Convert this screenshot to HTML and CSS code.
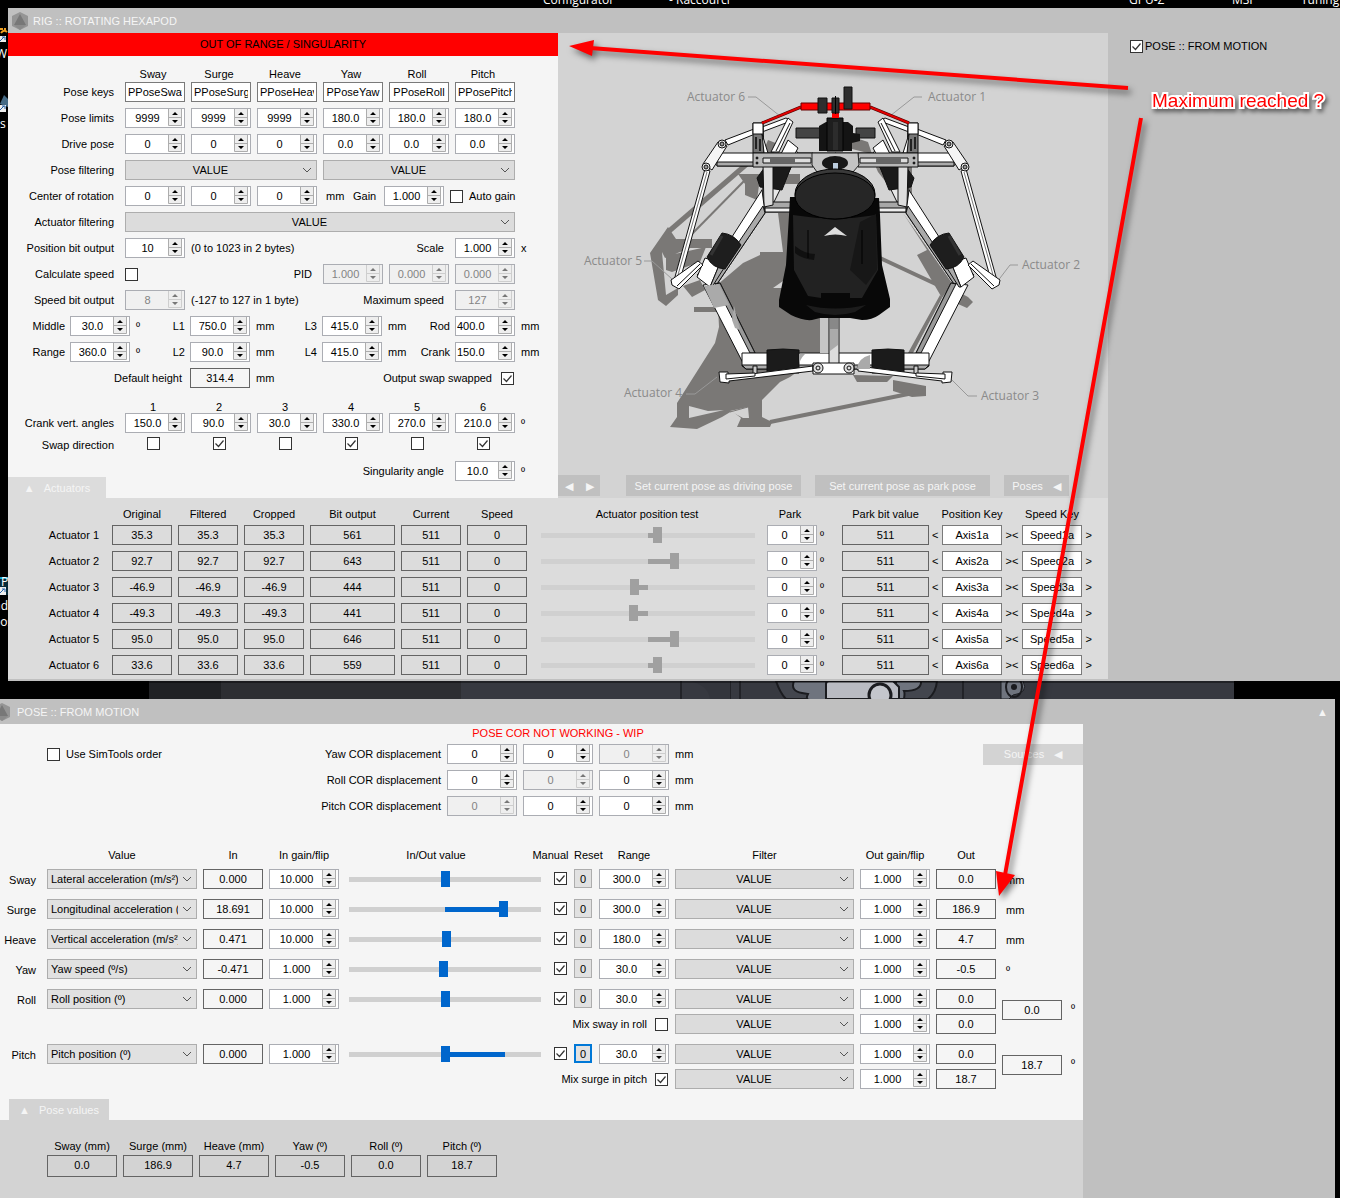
FILE: index.html
```html
<!DOCTYPE html>
<html lang="en">
<head>
<meta charset="utf-8">
<title>Rig :: Rotating Hexapod</title>
<link rel="stylesheet" href="styles.css">
</head>
<body>
<div class="desktop">
  <div class="shortcuts" aria-hidden="true">
    <span style="left:543px">Configurator</span><span style="left:669px">- Raccourci</span><span style="left:1129px">GPU-Z</span><span style="left:1232px">MSI</span><span style="left:1301px">Tuning</span>
  </div>
  <svg class="side-icons" width="8" height="640" viewBox="0 0 8 640" aria-hidden="true">
    <path d="M0 29h3M5 28v3M1 33q3-4 6-1" stroke="#f0a020" stroke-width="2" fill="none"/>
    <path d="M0 104l4-9 4 4v8z" fill="#456a85"/>
    <rect x="0" y="578" width="8" height="17" fill="#062a38"/><path d="M0 578h8" stroke="#19a6cc" stroke-width="2"/>
    <path d="M0 36h6v6H0zM0 105h6v7H0zM0 587h6v8H0z" fill="#eee"/>
    <path d="M0 41l4-4M2 37h3v3M0 110l4-4M2 106h3v3M0 593l4-4M2 589h3v3" stroke="#2563a8" fill="none"/>
    <text x="-4" y="58">W</text><text x="0" y="128">s</text><text x="1" y="586" fill="#1cc0f0">P</text><text x="-6" y="610">ado</text><text x="-7" y="626">pos</text>
  </svg>

  <section class="window rig">
    <header class="titlebar">
      <svg class="logo" width="18" height="20" viewBox="0 0 18 20"><path d="M9 1l8 4v10l-8 4-8-4V5z" fill="#959595"/><path d="M9 3l6 11H3z" fill="#787878"/><path d="M3 14h12l-6 5z" fill="#8b8b8b"/></svg>
      <h1>RIG :: ROTATING HEXAPOD</h1>
    </header>
    <div class="rig-body">
      <form class="rig-form">
        <p class="alert">OUT OF RANGE / SINGULARITY</p>
        <div class="row heads"><span></span><span>Sway</span><span>Surge</span><span>Heave</span><span>Yaw</span><span>Roll</span><span>Pitch</span></div>
        <div class="row"><span class="lbl">Pose keys</span><input class="key" aria-label="Sway key" value="PPoseSway"><input class="key" aria-label="Surge key" value="PPoseSurge"><input class="key" aria-label="Heave key" value="PPoseHeave"><input class="key" aria-label="Yaw key" value="PPoseYaw"><input class="key" aria-label="Roll key" value="PPoseRoll"><input class="key" aria-label="Pitch key" value="PPosePitch"></div>
        <div class="row"><span class="lbl">Pose limits</span><input type="number" step="any" aria-label="Sway limit" value="9999"><input type="number" step="any" aria-label="Surge limit" value="9999"><input type="number" step="any" aria-label="Heave limit" value="9999"><input type="number" step="any" aria-label="Yaw limit" value="180.0"><input type="number" step="any" aria-label="Roll limit" value="180.0"><input type="number" step="any" aria-label="Pitch limit" value="180.0"></div>
        <div class="row"><span class="lbl">Drive pose</span><input type="number" step="any" aria-label="Drive sway" value="0"><input type="number" step="any" aria-label="Drive surge" value="0"><input type="number" step="any" aria-label="Drive heave" value="0"><input type="number" step="any" aria-label="Drive yaw" value="0.0"><input type="number" step="any" aria-label="Drive roll" value="0.0"><input type="number" step="any" aria-label="Drive pitch" value="0.0"></div>
        <div class="row"><label class="lbl" for="pf">Pose filtering</label><select id="pf" class="span3"><option>VALUE</option></select><select class="span3" aria-label="Rotation filtering"><option>VALUE</option></select></div>
        <div class="row"><span class="lbl">Center of rotation</span><input type="number" step="any" aria-label="Center x" value="0"><input type="number" step="any" aria-label="Center y" value="0"><input type="number" step="any" aria-label="Center z" value="0">
          <div class="gain"><span class="unit-w">mm</span><label class="gain-l" for="gain">Gain</label><input id="gain" type="number" step="any" value="1.000"><input id="ag" type="checkbox"><label for="ag">Auto gain</label></div></div>
        <div class="row"><label class="lbl" for="af">Actuator filtering</label><select id="af" class="span6"><option>VALUE</option></select></div>
        <div class="row"><label class="lbl" for="pb">Position bit output</label><input id="pb" type="number" value="10"><span class="span3">(0 to 1023 in 2 bytes)</span><label class="lbl" for="sc">Scale</label><input id="sc" type="number" step="any" value="1.000"><span>x</span></div>
        <div class="row"><label class="lbl" for="cs">Calculate speed</label><input id="cs" type="checkbox"><span></span><span class="lbl">PID</span><input type="number" step="any" aria-label="P" value="1.000" disabled><input type="number" step="any" aria-label="I" value="0.000" disabled><input type="number" step="any" aria-label="D" value="0.000" disabled></div>
        <div class="row"><label class="lbl" for="sb">Speed bit output</label><input id="sb" type="number" value="8" disabled><span class="span2">(-127 to 127 in 1 byte)</span><label class="lbl span2" for="ms">Maximum speed</label><input id="ms" type="number" value="127" disabled></div>
        <div class="geo"><label class="lbl" for="mid">Middle</label><input id="mid" type="number" step="any" value="30.0"><div><span>º</span><label for="l1">L1</label></div><input id="l1" type="number" step="any" value="750.0"><div><span>mm</span><label for="l3">L3</label></div><input id="l3" type="number" step="any" value="415.0"><div><span>mm</span><label for="rod">Rod</label></div><input id="rod" class="left" type="number" step="any" value="400.0"><div><span>mm</span></div></div>
        <div class="geo"><label class="lbl" for="rng">Range</label><input id="rng" type="number" step="any" value="360.0"><div><span>º</span><label for="l2">L2</label></div><input id="l2" type="number" step="any" value="90.0"><div><span>mm</span><label for="l4">L4</label></div><input id="l4" type="number" step="any" value="415.0"><div><span>mm</span><label for="crk">Crank</label></div><input id="crk" class="left" type="number" step="any" value="150.0"><div><span>mm</span></div></div>
        <div class="geo"><label class="lbl wide" for="dh">Default height</label><output id="dh">314.4</output><div class="swapped"><span>mm</span><label for="os">Output swap swapped</label><input id="os" type="checkbox" checked></div></div>
        <div class="row heads nums"><span></span><span>1</span><span>2</span><span>3</span><span>4</span><span>5</span><span>6</span></div>
        <div class="row"><span class="lbl">Crank vert. angles</span><input type="number" step="any" aria-label="Crank angle 1" value="150.0"><input type="number" step="any" aria-label="Crank angle 2" value="90.0"><input type="number" step="any" aria-label="Crank angle 3" value="30.0"><input type="number" step="any" aria-label="Crank angle 4" value="330.0"><input type="number" step="any" aria-label="Crank angle 5" value="270.0"><input type="number" step="any" aria-label="Crank angle 6" value="210.0"><span>º</span></div>
        <div class="row heads swap"><span class="lbl">Swap direction</span><span><input type="checkbox" aria-label="Swap 1"></span><span><input type="checkbox" aria-label="Swap 2" checked></span><span><input type="checkbox" aria-label="Swap 3"></span><span><input type="checkbox" aria-label="Swap 4" checked></span><span><input type="checkbox" aria-label="Swap 5"></span><span><input type="checkbox" aria-label="Swap 6" checked></span></div>
        <div class="last-row"><button type="button" class="tab">▲<span>Actuators</span></button><div class="row sing"><label class="lbl" for="sa">Singularity angle</label><input id="sa" type="number" step="any" value="10.0"><span>º</span></div></div>
      </form>

      <div class="view">
        <svg class="hexapod" viewBox="558 33 550 442" role="img" aria-label="Hexapod rig seen from above">
          <g fill="#7a7876">
            <path d="M795 213H778L783 252H760V255L743 263 717 285 719 327 715 343 677 403V417L670 427 697 429 722 417 732 411 741 418 737 427H770L772 422 762 417V400L780 382 790 377 800 370 820 353V300Z"/>
            <path d="M903 213L952 283 942 298 917 255 927 250ZM942 298L913 353 908 353 940 295ZM945 285L968 297 973 302 967 308 958 304ZM853 375L857 382H887L893 376ZM893 380L926 386V396L912 397 893 391Z"/>
            <path d="M650 253L668 227 676 239H712V248H690L665 258 662 252 666 295 678 288V295L666 306 658 300ZM666 256L706 247 700 262 672 272 666 270ZM683 286L700 280 705 290 692 297ZM694 307H722V312H694ZM738 174H800V184H745ZM745 180L760 178 757 200 745 195Z"/>
            <path d="M763 152l5-12 10 4-6 12zM848 148l8-10 12 4 4 12z"/>
            <path d="M875 165H912V200H900L878 172Z"/>
          </g>
          <g stroke="#7a7876" fill="none"><path d="M668 232L748 163" stroke-width="5"/><path d="M690 236L746 179" stroke-width="2"/><path d="M770 422L923 391M880 258L940 286" stroke-width="4"/></g>
          <path d="M689 406L708 411 724 410 689 418ZM730 411L748 407 749 418 743 418ZM773 288L783 281V288ZM743 237H760V252H744Z" fill="#d3d3d3"/>
          <path d="M730 412L748 407" stroke="#7a7876"/>
          <path d="M748 97h8l24 19M922 97h-8l-24 19M644 261h8l20 18M1018 265h-8l-13 17M686 394h9l22-17M977 396h-9l-18-18" fill="none" stroke="#999"/>
          <g id="half" stroke="#111" stroke-width="1" stroke-linejoin="round">
            <path d="M717 153H836V166H717Z" fill="#fff"/><path d="M717 162H760V166H717Z" fill="#aaa"/>
            <path d="M798 153L774 202 764 206 762 190 788 141Z" fill="#e8e8e8"/>
            <path d="M788 140L798 148 790 163 778 160Z" fill="#fff"/>
            <path d="M770 160L793 162 782 190 760 187 757 178Z" fill="#1a1a1a"/>
            <path d="M765 202H836V212H765Z" fill="#a8a8a8"/><path d="M765 208H836V212H765Z" fill="#eee"/>
            <path d="M763 165H773V205L764 207Z" fill="#ddd"/>
            <path d="M762 190L765 213 717 284 697 275 730 240Z" fill="#fff"/><path d="M765 213L717 284 712 282 763 206Z" fill="#aaa"/>
            <path d="M703 285L720 283 755 353 743 363Z" fill="#fff"/><path d="M715 284L720 283 755 353H750Z" fill="#999"/>
            <path d="M705 258L720 263 710 287 697 277Z" fill="#fff"/><path d="M720 263L724 268 712 287H710Z" fill="#aaa"/>
            <path d="M722 233Q734 234 741 245L725 269Q712 268 707 257Z" fill="#1e1e1e"/><path d="M722 236L711 255" stroke="#333" stroke-width="3"/>
            <path d="M742 353H836V369H746L742 366Z" fill="#fff"/><path d="M742 365H836V369H746Z" fill="#aaa"/>
            <path d="M767 350Q783 348 799 350V373H767Z" fill="#1b1b1b"/>
            <path d="M753 366h4v11h-4z" fill="#ccc"/>
            <path d="M719 372L728 372 728 377 813 366 813 371 729 381 729 383 720 382Z" fill="#fff"/><path d="M726 374L755 373V376L726 379Z" fill="#fff"/>
            <path d="M705 169L710 171 679 284 673 284Z" fill="#fff"/><path d="M707 172L676 282" stroke="#777"/>
            <path d="M698 261L703 265 679 289 672 285 671 280Z" fill="#fff"/><path d="M700 264L677 286" fill="none"/>
            <path d="M725 140L754 129 755 134 728 145Z" fill="#fff"/>
            <path d="M762 127L786 118 791 121 762 132Z" fill="#fff"/>
            <path d="M788 118L793 122 779 152H771Z" fill="#fff"/><path d="M790 123L776 151" fill="none"/>
            <path d="M718 142L727 146 712 170 703 164Z" fill="#f5f5f5"/>
            <circle cx="722" cy="144" r="4" fill="#eee"/><circle cx="722" cy="144" r="2" fill="#999"/><circle cx="706" cy="167" r="4" fill="#eee"/><circle cx="706" cy="167" r="2" fill="#999"/>
            <path d="M753 123H763L764 153H753Z" fill="#777"/><path d="M753 123H763V134H753Z" fill="#fff"/><path d="M762 134L768 153H764Z" fill="#fff"/><path d="M756 137v12M760 139v12" stroke="#222" stroke-width="2"/>
            <path d="M753 153H813V167H753Z" fill="#b8b8b8"/><path d="M763 158H811V163H763Z" fill="#ddd"/><path d="M770 158H795V163H770Z" fill="#666" stroke="none"/>
            <circle cx="757" cy="158" r="1" fill="#111"/><circle cx="757" cy="163" r="1" fill="#111"/>
            <path d="M801 107L762 123" stroke="#400" stroke-width="3"/><path d="M801 107L762 123" stroke="#e00000" stroke-width="2"/>
          </g>
          <use href="#half" transform="matrix(-1 0 0 1 1671 0)"/>
          <path d="M870 355Q858 358 857 369H870ZM799 354H805Q799 360 799 366ZM704 286L719 284 729 305 714 308ZM732 320L734 306 740 330 735 328Z" fill="#aaa"/>
          <path d="M820 300V353H829V300Z" fill="#c6c6c6"/>
          <path d="M829 317H839V364H829Z" fill="#ddd" stroke="#111"/><path d="M830 318h8v11h-8z" fill="#888"/><path d="M830 329h8v16l-8 6z" fill="#aaa"/>
          <path d="M813 363H854V374H813Z" fill="#fff" stroke="#111"/>
          <g fill="#ddd" stroke="#111"><circle cx="818" cy="368" r="5"/><circle cx="818" cy="368" r="2"/><circle cx="849" cy="368" r="5"/><circle cx="849" cy="368" r="2"/></g>
          <path d="M812 153H858L859 165 853 172H817L812 165Z" fill="#c4c4c4" stroke="#222"/>
          <path d="M796 128H820V138H796ZM856 128H875V138H856Z" fill="#444" stroke="#111"/>
          <path d="M819 126L826 122H848L853 126V133L860 134V141L852 143V151H819Z" fill="#141414"/><path d="M827 118H843V151H827Z" fill="#1e1e1e" stroke="#000"/><path d="M833 122h5v28h-5z" fill="#2c2c2c"/>
          <path d="M801 103H870V110H801Z" fill="#f00" stroke="#600"/><path d="M832 110h7v8h-7z" fill="#f00"/>
          <path d="M818 98H827V113H818ZM832 98H839V113H832ZM844 87H852V109H844Z" fill="#2e2e2e" stroke="#111"/><path d="M835.5 96v18" stroke="#000"/>
          <ellipse cx="835" cy="163" rx="13" ry="7" fill="#171717"/><path d="M833 163h5v7h-5z" fill="#bcd"/>
          <path d="M795 197H790L789 215 786 265 779 300V307L791 315Q803 321 812 320L820 318H850L862 320Q872 320 879 315L890 307V299L882 265 880 215 879 198Z" fill="#080808"/>
          <path d="M793 215Q835 222 876 215L878 270 862 298H850V293H821V298L808 296 794 270Z" fill="#222"/>
          <path d="M860 222L876 214 877 270 866 285 850 270Z" fill="#171717"/><path d="M795 246Q805 254 815 254L814 260Q802 259 795 253Z" fill="#101010"/><path d="M808 230v28M862 230v34" stroke="#000"/>
          <path d="M806 305Q835 312 866 305L855 312Q835 318 815 312Z" fill="#1c1c1c"/>
          <ellipse cx="835" cy="194" rx="40" ry="25" fill="#3a3a3a" stroke="#000"/><ellipse cx="835" cy="196" rx="40" ry="23" fill="#262626" stroke="#000"/>
          <path d="M835 227L847 236Q835 233 824 236Z" fill="#ddd"/>
          <g class="callouts"><text x="687" y="101">Actuator 6</text><text x="928" y="101">Actuator 1</text><text x="584" y="265">Actuator 5</text><text x="1022" y="269">Actuator 2</text><text x="624" y="397">Actuator 4</text><text x="981" y="400">Actuator 3</text></g>
        </svg>
        <div class="toolbar">
          <div class="pager"><button type="button" aria-label="Previous">◀</button><button type="button" aria-label="Next">▶</button></div>
          <button type="button" class="set">Set current pose as driving pose</button>
          <button type="button" class="set">Set current pose as park pose</button>
          <button type="button" class="poses">Poses<span>◀</span></button>
        </div>
      </div>

      <aside class="sources"><label><input type="checkbox" checked>POSE :: FROM MOTION</label></aside>

      <div class="actuators">
        <table>
          <colgroup><col class="c101"><col class="c66"><col class="c66"><col class="c66"><col class="c91"><col class="c66"><col class="c66"><col class="c234"><col class="c75"><col class="c92"><col class="c80"><col class="c80"></colgroup>
          <thead><tr><td></td><th>Original</th><th>Filtered</th><th>Cropped</th><th>Bit output</th><th>Current</th><th>Speed</th><th>Actuator position test</th><th class="park-h">Park</th><th>Park bit value</th><th>Position Key</th><th>Speed Key</th></tr></thead>
          <tbody>
            <tr><th scope="row">Actuator 1</th><td><output>35.3</output></td><td><output>35.3</output></td><td><output>35.3</output></td><td><output>561</output></td><td><output>511</output></td><td><output>0</output></td><td class="slide"><input type="range" aria-label="Actuator 1 test" max="1023" value="561" style="--v:54.8%"></td><td class="park"><input type="number" aria-label="Park 1" value="0"><span>º</span></td><td><output>511</output></td><td><div class="tag">&lt;<input class="key" aria-label="Position key 1" value="Axis1a">&gt;</div></td><td><div class="tag">&lt;<input class="key" aria-label="Speed key 1" value="Speed1a">&gt;</div></td></tr>
            <tr><th scope="row">Actuator 2</th><td><output>92.7</output></td><td><output>92.7</output></td><td><output>92.7</output></td><td><output>643</output></td><td><output>511</output></td><td><output>0</output></td><td class="slide"><input type="range" aria-label="Actuator 2 test" max="1023" value="643" style="--v:62.9%"></td><td class="park"><input type="number" aria-label="Park 2" value="0"><span>º</span></td><td><output>511</output></td><td><div class="tag">&lt;<input class="key" aria-label="Position key 2" value="Axis2a">&gt;</div></td><td><div class="tag">&lt;<input class="key" aria-label="Speed key 2" value="Speed2a">&gt;</div></td></tr>
            <tr><th scope="row">Actuator 3</th><td><output>-46.9</output></td><td><output>-46.9</output></td><td><output>-46.9</output></td><td><output>444</output></td><td><output>511</output></td><td><output>0</output></td><td class="slide"><input type="range" aria-label="Actuator 3 test" max="1023" value="444" style="--v:43.4%"></td><td class="park"><input type="number" aria-label="Park 3" value="0"><span>º</span></td><td><output>511</output></td><td><div class="tag">&lt;<input class="key" aria-label="Position key 3" value="Axis3a">&gt;</div></td><td><div class="tag">&lt;<input class="key" aria-label="Speed key 3" value="Speed3a">&gt;</div></td></tr>
            <tr><th scope="row">Actuator 4</th><td><output>-49.3</output></td><td><output>-49.3</output></td><td><output>-49.3</output></td><td><output>441</output></td><td><output>511</output></td><td><output>0</output></td><td class="slide"><input type="range" aria-label="Actuator 4 test" max="1023" value="441" style="--v:43.1%"></td><td class="park"><input type="number" aria-label="Park 4" value="0"><span>º</span></td><td><output>511</output></td><td><div class="tag">&lt;<input class="key" aria-label="Position key 4" value="Axis4a">&gt;</div></td><td><div class="tag">&lt;<input class="key" aria-label="Speed key 4" value="Speed4a">&gt;</div></td></tr>
            <tr><th scope="row">Actuator 5</th><td><output>95.0</output></td><td><output>95.0</output></td><td><output>95.0</output></td><td><output>646</output></td><td><output>511</output></td><td><output>0</output></td><td class="slide"><input type="range" aria-label="Actuator 5 test" max="1023" value="646" style="--v:63.1%"></td><td class="park"><input type="number" aria-label="Park 5" value="0"><span>º</span></td><td><output>511</output></td><td><div class="tag">&lt;<input class="key" aria-label="Position key 5" value="Axis5a">&gt;</div></td><td><div class="tag">&lt;<input class="key" aria-label="Speed key 5" value="Speed5a">&gt;</div></td></tr>
            <tr><th scope="row">Actuator 6</th><td><output>33.6</output></td><td><output>33.6</output></td><td><output>33.6</output></td><td><output>559</output></td><td><output>511</output></td><td><output>0</output></td><td class="slide"><input type="range" aria-label="Actuator 6 test" max="1023" value="559" style="--v:54.6%"></td><td class="park"><input type="number" aria-label="Park 6" value="0"><span>º</span></td><td><output>511</output></td><td><div class="tag">&lt;<input class="key" aria-label="Position key 6" value="Axis6a">&gt;</div></td><td><div class="tag">&lt;<input class="key" aria-label="Speed key 6" value="Speed6a">&gt;</div></td></tr>
          </tbody>
        </table>
      </div>
    </div>
  </section>

  <svg class="wallpaper" width="1234" height="18" viewBox="0 0 1234 18" aria-hidden="true">
    <path d="M149 0h72v18h-72z" fill="#202124"/><path d="M221 0h240v18H221z" fill="#2d2e32"/><path d="M461 0h773v18H461z" fill="#373940"/>
    <path d="M681 0v18M730 0v18M740 0v18M963 0v18" stroke="#222328" stroke-width="2"/><path d="M690 0q18 4 20 18h20V0z" fill="#33353c"/>
    <path d="M776 0q4 12 10 18h142q8-6 9-18z" fill="#43464e" stroke="#1b1c20" stroke-width="2"/>
    <path d="M794 0q-4 10 8 12l6 1q-3 6 2 6h20V0zM896 0v18h8q1-6 0-8 18 0 17-10z" fill="#6f747e" stroke="#1b1c20" stroke-width="2"/>
    <path d="M826 3q0-3 3-3h64l6 6v12h-73z" fill="#b9bbc2" stroke="#1b1c20" stroke-width="2"/><circle cx="880" cy="14" r="11" fill="#c4c6cc" stroke="#1b1c20" stroke-width="3"/>
    <path d="M1001 0h22q6 12-10 14l-4 4h-8z" fill="#6f747e" stroke="#1b1c20"/><ellipse cx="1014" cy="6" rx="8" ry="10" fill="none" stroke="#1b1c20" stroke-width="2"/><circle cx="1014" cy="6" r="3" fill="#1b1c20"/>
    <path d="M0 0h1234v2H0z" fill="#000" opacity=".4"/>
  </svg>

  <section class="window pose">
    <header class="titlebar">
      <svg class="logo" width="11" height="20" viewBox="7 0 11 20"><path d="M9 1l8 4v10l-8 4-8-4V5z" fill="#959595"/><path d="M9 3l6 11H3z" fill="#787878"/><path d="M3 14h12l-6 5z" fill="#8b8b8b"/></svg>
      <h1>POSE :: FROM MOTION</h1>
      <button type="button" class="collapse" aria-label="Collapse">▲</button>
    </header>
    <div class="pose-body">
      <form class="pose-form">
        <div class="cor">
          <strong>POSE COR NOT WORKING - WIP</strong>
          <div class="cor-l"><label><input type="checkbox">Use SimTools order</label><span>Yaw COR displacement</span></div><input type="number" aria-label="Yaw COR 1" value="0"><input type="number" aria-label="Yaw COR 2" value="0"><input type="number" aria-label="Yaw COR 3" value="0" disabled><span>mm</span><button type="button" class="src">Sources<span>◀</span></button>
          <div class="cor-l"><span>Roll COR displacement</span></div><input type="number" aria-label="Roll COR 1" value="0"><input type="number" aria-label="Roll COR 2" value="0" disabled><input type="number" aria-label="Roll COR 3" value="0"><span class="rest">mm</span>
          <div class="cor-l"><span>Pitch COR displacement</span></div><input type="number" aria-label="Pitch COR 1" value="0" disabled><input type="number" aria-label="Pitch COR 2" value="0"><input type="number" aria-label="Pitch COR 3" value="0"><span class="rest">mm</span>
        </div>
        <table class="motion">
          <colgroup><col class="c44"><col class="c156"><col class="c66"><col class="c76"><col class="c188"><col class="c41"><col class="c25"><col class="c76"><col class="c185"><col class="c76"><col class="c66"><col class="c84"></colgroup>
          <thead><tr><td></td><th>Value</th><th>In</th><th>In gain/flip</th><th>In/Out value</th><th class="man-h">Manual</th><th>Reset</th><th>Range</th><th>Filter</th><th>Out gain/flip</th><th>Out</th><td></td></tr></thead>
          <tbody>
            <tr><th scope="row">Sway</th><td><select class="val" aria-label="Sway source"><option>Lateral acceleration (m/s²)</option></select></td><td><output>0.000</output></td><td><input type="number" step="any" aria-label="Sway in gain" value="10.000"></td><td class="slide"><input type="range" class="blue" aria-label="Sway value" value="50" style="--v:50%"></td><td class="man"><input type="checkbox" aria-label="Sway manual" checked></td><td><button type="button" class="reset">0</button></td><td><input type="number" step="any" aria-label="Sway range" value="300.0"></td><td><select aria-label="Sway filter"><option>VALUE</option></select></td><td><input type="number" step="any" aria-label="Sway out gain" value="1.000"></td><td><output>0.0</output></td><td class="unit">mm</td></tr>
            <tr><th scope="row">Surge</th><td><select class="val" aria-label="Surge source"><option>Longitudinal acceleration (m/s²)</option></select></td><td><output>18.691</output></td><td><input type="number" step="any" aria-label="Surge in gain" value="10.000"></td><td class="slide"><input type="range" class="blue" aria-label="Surge value" value="82" style="--v:82%"></td><td class="man"><input type="checkbox" aria-label="Surge manual" checked></td><td><button type="button" class="reset">0</button></td><td><input type="number" step="any" aria-label="Surge range" value="300.0"></td><td><select aria-label="Surge filter"><option>VALUE</option></select></td><td><input type="number" step="any" aria-label="Surge out gain" value="1.000"></td><td><output>186.9</output></td><td class="unit">mm</td></tr>
            <tr><th scope="row">Heave</th><td><select class="val" aria-label="Heave source"><option>Vertical acceleration (m/s²)</option></select></td><td><output>0.471</output></td><td><input type="number" step="any" aria-label="Heave in gain" value="10.000"></td><td class="slide"><input type="range" class="blue" aria-label="Heave value" value="51" style="--v:51%"></td><td class="man"><input type="checkbox" aria-label="Heave manual" checked></td><td><button type="button" class="reset">0</button></td><td><input type="number" step="any" aria-label="Heave range" value="180.0"></td><td><select aria-label="Heave filter"><option>VALUE</option></select></td><td><input type="number" step="any" aria-label="Heave out gain" value="1.000"></td><td><output>4.7</output></td><td class="unit">mm</td></tr>
            <tr><th scope="row">Yaw</th><td><select class="val" aria-label="Yaw source"><option>Yaw speed (º/s)</option></select></td><td><output>-0.471</output></td><td><input type="number" step="any" aria-label="Yaw in gain" value="1.000"></td><td class="slide"><input type="range" class="blue" aria-label="Yaw value" value="49" style="--v:49%"></td><td class="man"><input type="checkbox" aria-label="Yaw manual" checked></td><td><button type="button" class="reset">0</button></td><td><input type="number" step="any" aria-label="Yaw range" value="30.0"></td><td><select aria-label="Yaw filter"><option>VALUE</option></select></td><td><input type="number" step="any" aria-label="Yaw out gain" value="1.000"></td><td><output>-0.5</output></td><td class="unit">º</td></tr>
            <tr class="pair"><th scope="row">Roll</th><td><select class="val" aria-label="Roll source"><option>Roll position (º)</option></select></td><td><output>0.000</output></td><td><input type="number" step="any" aria-label="Roll in gain" value="1.000"></td><td class="slide"><input type="range" class="blue" aria-label="Roll value" value="50" style="--v:50%"></td><td class="man"><input type="checkbox" aria-label="Roll manual" checked></td><td><button type="button" class="reset">0</button></td><td><input type="number" step="any" aria-label="Roll range" value="30.0"></td><td><select aria-label="Roll filter"><option>VALUE</option></select></td><td><input type="number" step="any" aria-label="Roll out gain" value="1.000"></td><td><output>0.0</output></td><td class="sum" rowspan="2"><div><output>0.0</output><span>º</span></div></td></tr>
            <tr><td class="mix" colspan="8"><label>Mix sway in roll<input type="checkbox"></label></td><td><select aria-label="Sway mix filter"><option>VALUE</option></select></td><td><input type="number" step="any" aria-label="Sway mix gain" value="1.000"></td><td><output>0.0</output></td></tr>
            <tr class="pair"><th scope="row">Pitch</th><td><select class="val" aria-label="Pitch source"><option>Pitch position (º)</option></select></td><td><output>0.000</output></td><td><input type="number" step="any" aria-label="Pitch in gain" value="1.000"></td><td class="slide"><input type="range" class="blue" aria-label="Pitch value" value="50" style="--v:81%"></td><td class="man"><input type="checkbox" aria-label="Pitch manual" checked></td><td><button type="button" class="reset active">0</button></td><td><input type="number" step="any" aria-label="Pitch range" value="30.0"></td><td><select aria-label="Pitch filter"><option>VALUE</option></select></td><td><input type="number" step="any" aria-label="Pitch out gain" value="1.000"></td><td><output>0.0</output></td><td class="sum" rowspan="2"><div><output>18.7</output><span>º</span></div></td></tr>
            <tr class="pair"><td class="mix" colspan="8"><label>Mix surge in pitch<input type="checkbox" checked></label></td><td><select aria-label="Surge mix filter"><option>VALUE</option></select></td><td><input type="number" step="any" aria-label="Surge mix gain" value="1.000"></td><td><output>18.7</output></td></tr>
          </tbody>
        </table>
        <button type="button" class="tab">▲<span>Pose values</span></button>
      </form>
      <div class="values">
        <label>Sway (mm)<output>0.0</output></label><label>Surge (mm)<output>186.9</output></label><label>Heave (mm)<output>4.7</output></label><label>Yaw (º)<output>-0.5</output></label><label>Roll (º)<output>0.0</output></label><label>Pitch (º)<output>18.7</output></label>
      </div>
    </div>
  </section>

  <svg class="arrows" width="1350" height="1198" viewBox="0 0 1350 1198" aria-hidden="true">
    <g stroke="#f00" stroke-width="4"><path d="M1128 88L590 48M1141 118L1005 875"/></g>
    <path d="M569 46L594 40 592 56ZM999 896L996 871 1015 875Z" fill="#f00"/>
  </svg>
  <p class="note">Maximum reached ?</p>
</div>
</body>
</html>
```
FILE: styles.css
```css
* { box-sizing: border-box; }
body {
  margin: 0;
  padding-right: 10px;
  background: #fff;
  color: #000;
  font: 11px/16px "Liberation Sans", Arial, sans-serif;
}
h1, p, form { margin: 0; }
h1, th, strong { font-size: inherit; font-weight: normal; }
input, select, button, output { font: inherit; color: inherit; margin: 0; border-radius: 0; }

.desktop { position: relative; display: flex; flex-direction: column; min-height: 100vh; padding-top: 8px; background: #000; overflow: hidden; }
.shortcuts span { position: absolute; top: -8px; color: #fff; font: 12px/16px "Open Sans", sans-serif; white-space: nowrap; }
.side-icons { position: absolute; left: 0; top: 0; font: 12px "Open Sans", sans-serif; }
.side-icons text { fill: #fff; }

.window { background: #c0c0c0; }
.rig { position: relative; margin-left: 8px; }
.pose { flex: 1; display: flex; flex-direction: column; margin-right: 5px; }
.wallpaper { display: block; flex: none; }
.titlebar { display: flex; align-items: center; height: 25px; color: #f5f5f5; }
.titlebar .logo { flex: none; margin: 0 4px 0 3px; }
.pose .titlebar .logo { margin: 0 6px 0 0; }
.collapse { margin-left: auto; padding: 0 7px; border: 0; background: none; }

/* shared controls */
input[type="number"], .key {
  width: 60px; height: 20px; padding: 0 2px 1px 1px;
  border: 1px solid #abadb3; background: #fff; text-align: center; outline: 0;
  appearance: none;
}
input[type="number"]::-webkit-inner-spin-button {
  appearance: none; opacity: 1; width: 14px; height: 18px; margin: 0;
  background: url("data:image/svg+xml,%3Csvg xmlns='http://www.w3.org/2000/svg' width='14' height='18'%3E%3Cpath d='M.5 0V16.500H13.500V0M1 8.500H13' fill='%23eee' stroke='%23adadad'/%3E%3Cpath d='M4 6h6L7 3zM4 11h6L7 14z' fill='%23000'/%3E%3C/svg%3E") no-repeat;
}
input[type="number"]:disabled { background: #f0f0f0; color: #838383; }
input[type="number"]:disabled::-webkit-inner-spin-button { opacity: .5; }
input.left { text-align: left; }
.key { padding: 0 2px; border-color: #7a7a7a; }
output { display: block; width: 60px; height: 20px; border: 1px solid #646464; line-height: 19px; text-align: center; }
input[type="checkbox"] { appearance: none; flex: none; width: 13px; height: 13px; border: 1px solid #333; background: #fff; vertical-align: top; }
input[type="checkbox"]:checked { background: #fff url("data:image/svg+xml,%3Csvg xmlns='http://www.w3.org/2000/svg' width='11' height='11'%3E%3Cpath d='M1.500 5.500l3 3 5-6' fill='none' stroke='%23333' stroke-width='1.200'/%3E%3C/svg%3E"); }
select {
  appearance: none; height: 20px; padding: 0 22px 0 1px; border: 1px solid #adadad; line-height: 18px;
  background: #dcdcdc url("data:image/svg+xml,%3Csvg xmlns='http://www.w3.org/2000/svg' width='10' height='6'%3E%3Cpath d='M1 1l4 4 4-4' fill='none' stroke='%23555'/%3E%3C/svg%3E") no-repeat right 4px center;
  text-align: center; text-align-last: center;
}
button { border: 0; padding: 0; white-space: nowrap; }
input[type="range"] {
  --ink: #a0a0a0;
  appearance: none; display: block; width: 214px; height: 16px;
  background:
    linear-gradient(90deg, transparent min(50%, var(--v)), var(--ink) 0, var(--ink) max(50%, var(--v)), transparent 0) center / 100% 5px no-repeat,
    linear-gradient(#d0d0d0, #d0d0d0) center / 100% 5px no-repeat;
}
input[type="range"]::-webkit-slider-thumb { appearance: none; width: 9px; height: 16px; background: var(--ink); }
input.blue { --ink: #0066cc; }
.tab { width: 98px; height: 21px; background: #dcdcdc; color: #f5f5f5; }
.tab span { margin-left: 9px; }

/* rig window */
.rig-body { display: grid; grid-template-columns: 550px 550px minmax(0, 1fr); }
.rig-form { background: #f5f5f5; white-space: nowrap; }
.alert { height: 23px; background: #f00; line-height: 23px; text-align: center; }
.row { display: grid; grid-template-columns: 111px repeat(6, 60px) auto; column-gap: 6px; align-items: center; height: 26px; }
.lbl { padding-right: 5px; text-align: right; }
.span2 { grid-column: span 2; }
.span3 { grid-column: span 3; }
.span6 { grid-column: span 6; }
.heads { height: 23px; padding-top: 10px; }
.heads span:not(.lbl) { padding-right: 4px; text-align: center; }
.nums { height: 19px; padding-top: 8px; }
.swap { height: 18px; padding: 0; }
.gain { grid-column: span 4; display: flex; align-items: center; padding-left: 3px; gap: 6px; }
.unit-w { width: 21px; }
.gain-l { width: 25px; }
.geo { display: grid; grid-template-columns: 62px 60px 60px 60px 72px 60px 73px 60px auto; align-items: center; height: 26px; }
.geo > div { display: flex; justify-content: space-between; padding: 0 5px 0 6px; }
.geo .wide { grid-column: span 3; padding-right: 8px; }
.geo .swapped { grid-column: span 4; align-items: center; padding-right: 1px; }
.swapped span { margin-right: auto; }
.swapped input { margin-left: 9px; }
.last-row { display: flex; height: 44px; padding-top: 4px; }
.last-row .tab { align-self: flex-end; flex: none; }
.sing { grid-template-columns: 343px 60px auto; }

.view { display: flex; flex-direction: column; background: #d3d3d3; }
.hexapod { display: block; width: 100%; flex: 1; }
.callouts { fill: #8a8a8a; font: 12px "Open Sans", sans-serif; }
.toolbar { display: flex; gap: 14px; height: 23px; color: #f5f5f5; }
.toolbar button { height: 21px; background: #c0c0c0; }
.pager { display: flex; margin-right: 12px; }
.pager button { width: 21px; }
.set { width: 175px; }
.poses { width: 65px; }
.poses span, .src span { margin-left: 10px; }
.sources { grid-row: span 2; padding: 5px 22px; }
.sources label { display: flex; align-items: center; gap: 2px; }

.actuators { grid-column: 1 / 3; padding-bottom: 1px; background: #dcdcdc; border-bottom: 2px solid #c0c0c0; }
table { table-layout: fixed; width: 0; border-spacing: 0; white-space: nowrap; }
td, th { padding: 0 3px; }
.actuators table { padding-top: 8px; }
.actuators thead tr { height: 16px; }
.actuators tbody tr { height: 26px; }
.actuators th[scope] { padding-right: 10px; text-align: right; }
.actuators output { width: 100%; }
.actuators .slide { padding: 0 11px; }
.park input[type="number"] { width: 50px; }
.park span { margin-left: 3px; }
.actuators .park-h { padding-right: 26px; }
.tag { display: flex; justify-content: space-between; align-items: center; margin: 0 -3px; }
.c25 { width: 25px; }
.c41 { width: 41px; }
.c44 { width: 44px; }
.c66 { width: 66px; }
.c75 { width: 75px; }
.c76 { width: 76px; }
.c80 { width: 80px; }
.c84 { width: 84px; }
.c91 { width: 91px; }
.c92 { width: 93px; }
.c101 { width: 101px; }
.c156 { width: 156px; }
.c185 { width: 185px; }
.c188 { width: 188px; }
.c234 { width: 234px; }

/* pose window */
.pose-body { flex: 1; display: flex; flex-direction: column; width: 1083px; }
.pose-form { background: #f5f5f5; }
.cor { display: grid; grid-template-columns: 441px 70px 70px 70px auto 1fr; grid-template-rows: 17px 26px 26px 26px; column-gap: 6px; align-items: center; white-space: nowrap; }
.cor strong { grid-column: 2 / 5; justify-self: center; color: #f00; }
.cor-l { grid-column: 1; display: flex; justify-content: space-between; padding: 0 0 0 47px; }
.cor-l label { display: flex; align-items: center; gap: 6px; }
.cor-l span { margin-left: auto; }
.cor input[type="number"], .motion input[type="number"] { width: 70px; }
.rest { grid-column: 5 / 7; }
.src { justify-self: end; width: 100px; height: 21px; background: #d3d3d3; color: #f5f5f5; }
.motion { margin-top: 26px; }
.motion thead tr { height: 24px; }
.motion tbody tr { height: 30px; }
.motion tbody .pair { height: 25px; }
.motion td, .motion th { vertical-align: top; }
.motion thead th { padding-top: 2px; }
.motion .man-h { padding: 2px 0 0; }
.motion th[scope] { padding: 3px 8px 0 0; text-align: right; }
.motion input, .motion output, .motion select { display: block; }
.motion select { width: 100%; }
.motion .val { padding: 0 18px 0 3px; background-color: #e1e1e1; text-align: left; text-align-last: left; }
.motion .slide { padding: 2px 0 0 7px; }
.motion .slide input { width: 192px; }
.motion .man { padding: 3px 0 0 24px; }
.reset { display: block; width: 18px; height: 19px; border: 1px solid #adadad; background: #e1e1e1; }
.reset.active { border: 2px solid #0078d7; }
.motion .unit { padding: 3px 0 0 7px; }
.sum div { display: flex; gap: 9px; padding-top: 11px; }
.mix label { display: flex; justify-content: flex-end; align-items: center; gap: 8px; height: 20px; padding-right: 1px; }
.pose-form .tab { display: block; width: 100px; margin: 5px 0 0 9px; background: #d3d3d3; }
.values { flex: 1; display: flex; gap: 6px; padding: 18px 0 20px 47px; background: #d3d3d3; }
.values label { text-align: center; }
.values output { width: 70px; height: 22px; margin-top: 1px; }

/* annotations lying over the windows */
.arrows { position: absolute; left: 0; top: 0; pointer-events: none; filter: drop-shadow(3px 4px 3px rgba(0, 0, 0, .5)); }
.note {
  position: absolute; left: 1152px; top: 90px; color: #f00; font: 19px/22px "Liberation Sans", sans-serif; white-space: nowrap;
  -webkit-text-stroke: 4px #fff; paint-order: stroke fill; filter: drop-shadow(2px 3px 2px rgba(0, 0, 0, .5));
}
```
